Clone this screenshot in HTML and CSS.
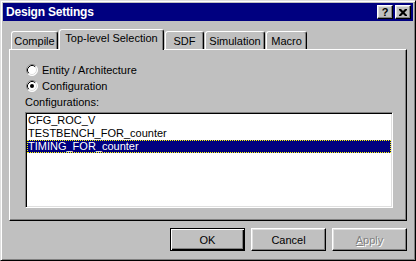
FILE: index.html
```html
<!doctype html>
<html>
<head lang="en">
    <meta charset="UTF-8">
    <title>Design Settings</title>
    <link rel="stylesheet" href="styles.css">
</head>
<body>
<div class="window">
    <div class="titlebar">
        <span class="title">Design Settings</span>
        <div class="caption-btns">
            <div class="cap-btn help">?</div>
            <div class="cap-btn close">
                <svg width="8" height="7" viewBox="0 0 8 7">
                    <path d="M0 0h2l2 2l2 -2h2v1l-2.5 2.5l2.5 2.5v1h-2l-2 -2l-2 2h-2v-1l2.5 -2.5l-2.5 -2.5z" fill="#000"/>
                </svg>
            </div>
        </div>
    </div>
    <div class="content">
        <div class="tabs">
            <div class="tab t-compile">Compile</div>
            <div class="tab active t-top">Top-level Selection</div>
            <div class="tab t-sdf">SDF</div>
            <div class="tab t-sim">Simulation</div>
            <div class="tab t-macro">Macro</div>
        </div>
        <div class="panel">
            <div class="radio-row">
                <svg class="radio" width="12" height="12" viewBox="0 0 12 12">
                    <circle cx="6" cy="6" r="5.5" fill="#fff"/>
                    <path d="M2.11 9.89A5.5 5.5 0 0 1 9.89 2.11" fill="none" stroke="#808080"/>
                    <path d="M9.89 2.11A5.5 5.5 0 0 1 2.11 9.89" fill="none" stroke="#fff"/>
                    <path d="M2.82 9.18A4.5 4.5 0 0 1 9.18 2.82" fill="none" stroke="#000"/>
                    <path d="M9.18 2.82A4.5 4.5 0 0 1 2.82 9.18" fill="none" stroke="#dfdfdf"/>
                </svg>
                <span>Entity / Architecture</span>
            </div>
            <div class="radio-row">
                <svg class="radio" width="12" height="12" viewBox="0 0 12 12">
                    <circle cx="6" cy="6" r="5.5" fill="#fff"/>
                    <path d="M2.11 9.89A5.5 5.5 0 0 1 9.89 2.11" fill="none" stroke="#808080"/>
                    <path d="M9.89 2.11A5.5 5.5 0 0 1 2.11 9.89" fill="none" stroke="#fff"/>
                    <path d="M2.82 9.18A4.5 4.5 0 0 1 9.18 2.82" fill="none" stroke="#000"/>
                    <path d="M9.18 2.82A4.5 4.5 0 0 1 2.82 9.18" fill="none" stroke="#dfdfdf"/>
                    <circle cx="6" cy="6" r="2" fill="#000"/>
                </svg>
                <span>Configuration</span>
            </div>
            <div class="label">Configurations:</div>
            <div class="listbox">
                <div class="item">CFG_ROC_V</div>
                <div class="item">TESTBENCH_FOR_counter</div>
                <div class="item selected">TIMING_FOR_counter</div>
            </div>
        </div>
        <div class="buttons">
            <div class="btn default">OK</div>
            <div class="btn">Cancel</div>
            <div class="btn disabled"><u>A</u>pply</div>
        </div>
    </div>
</div>
</body>
</html>
```
FILE: styles.css
```css
* {
    padding: 0;
    margin: 0;
    box-sizing: border-box;
}

body {
    background: #c0c0c0;
    font-family: "Liberation Sans", Arial, sans-serif;
    font-size: 11px;
    color: #000;
}

.window {
    width: 416px;
    height: 261px;
    background: #c0c0c0;
    border: 1px solid;
    border-color: #dfdfdf #000 #000 #dfdfdf;
    box-shadow: inset 1px 1px #fff, inset -1px -1px #808080;
    padding: 2px;
}

.titlebar {
    height: 18px;
    background: #000080;
    display: flex;
    align-items: center;
    justify-content: space-between;
    padding: 0 2px 0 3px;
}

.title {
    color: #fff;
    font-weight: bold;
    font-size: 12px;
    letter-spacing: -0.2px;
}

.caption-btns {
    display: flex;
    gap: 2px;
}

.cap-btn {
    width: 16px;
    height: 14px;
    background: #c0c0c0;
    border: 1px solid;
    border-color: #fff #000 #000 #fff;
    box-shadow: inset -1px -1px #808080, inset 1px 1px #dfdfdf;
    display: flex;
    align-items: center;
    justify-content: center;
}

.cap-btn.help {
    font-weight: bold;
    font-size: 11px;
    line-height: 12px;
}

.content {
    padding: 8px 6px 7px;
}

.tabs {
    height: 20px;
    display: flex;
    align-items: flex-end;
    padding-left: 2px;
}

.tab {
    height: 18px;
    margin-right: 1px;
    border: 1px solid;
    border-bottom: none;
    border-color: #fff #000 #000 #fff;
    border-radius: 3px 3px 0 0;
    box-shadow: inset -1px 0 #808080;
    background: #c0c0c0;
    text-align: center;
    line-height: 16px;
    padding-top: 1px;
}

.tab.active {
    height: 21px;
    margin-bottom: -1px;
    position: relative;
    z-index: 1;
    padding-top: 0;
    line-height: 17px;
}

.t-compile { width: 47px; }
.t-top { width: 105px; }
.t-sdf { width: 39px; }
.t-sim { width: 60px; }
.t-macro { width: 41px; }

.panel {
    height: 172px;
    border: 1px solid;
    border-color: #fff #000 #000 #fff;
    box-shadow: inset -1px -1px #808080;
    padding: 12px 12px 0 15px;
}

.radio-row {
    height: 16px;
    display: flex;
    align-items: center;
    padding-left: 1px;
}

.radio {
    margin-right: 4px;
}

.label {
    height: 16px;
    line-height: 16px;
}

.listbox {
    margin-top: 2px;
    width: 368px;
    height: 96px;
    background: #fff;
    border: 1px solid;
    border-color: #808080 #fff #fff #808080;
    box-shadow: inset 1px 1px #000, inset -1px -1px #dfdfdf;
    padding: 1px;
}

.item {
    height: 13px;
    line-height: 13px;
    padding-left: 1px;
}

.item.selected {
    background: #000080;
    color: #fff;
    outline: 1px dotted #ffff00;
    outline-offset: -1px;
}

.buttons {
    margin-top: 7px;
    display: flex;
    justify-content: flex-end;
    gap: 6px;
}

.btn {
    width: 75px;
    height: 23px;
    border: 1px solid;
    border-color: #fff #000 #000 #fff;
    box-shadow: inset -1px -1px #808080, inset 1px 1px #dfdfdf;
    display: flex;
    align-items: center;
    justify-content: center;
}

.btn.default {
    border-color: #000;
    box-shadow: inset 1px 1px #fff, inset -1px -1px #000, inset -2px -2px #808080;
}

.btn.disabled {
    color: #808080;
    text-shadow: 1px 1px #fff;
}
```
